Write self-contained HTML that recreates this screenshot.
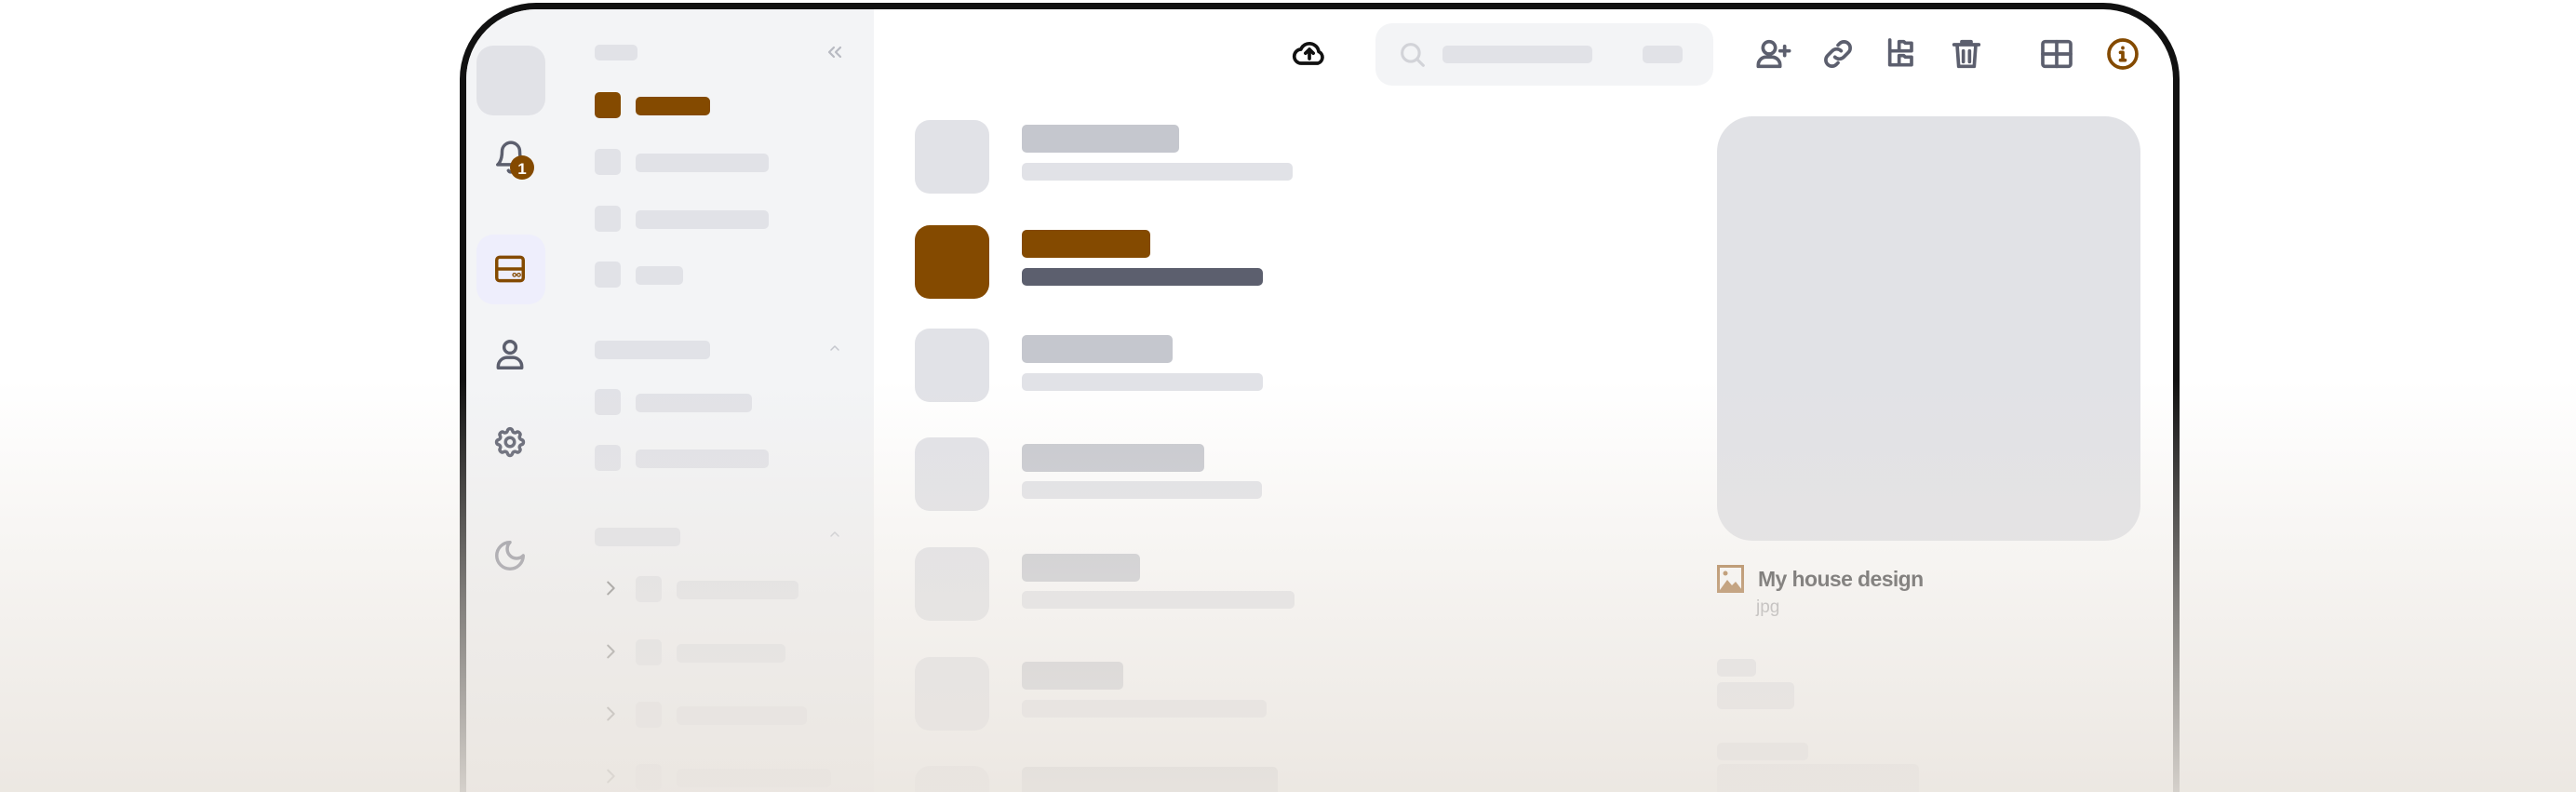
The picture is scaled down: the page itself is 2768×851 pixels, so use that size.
<!DOCTYPE html>
<html><head><meta charset="utf-8"><style>
*{margin:0;padding:0;box-sizing:border-box}
html,body{width:2768px;height:851px;overflow:hidden}
body{background:#fff;position:relative;font-family:"Liberation Sans",sans-serif}
#w{position:absolute;left:0;top:0;width:2768px;height:851px;overflow:hidden}
.a{position:absolute}
.frame{position:absolute;left:494px;top:3px;width:1848px;height:848px;border:7px solid #111;border-bottom:none;border-radius:82px 82px 0 0;background:#fff}
.sq{position:absolute;background:#e1e2e7;border-radius:5px}
.t{position:absolute;background:#c5c7ce;border-radius:5px}
.s{position:absolute;background:#e1e2e7;border-radius:5px}
.th{position:absolute;width:80px;height:79px;background:#e1e2e7;border-radius:16px;left:983px}
svg.i{position:absolute;fill:none;stroke:#5c5f6e;stroke-width:2.2;stroke-linecap:round;stroke-linejoin:round}
.fade{position:absolute;left:0;top:0;width:2768px;height:851px;background:linear-gradient(to bottom,rgba(234,229,223,0) 0%,rgba(234,229,223,0) 48%,rgba(234,229,223,.5) 75%,rgba(234,229,223,.9) 100%);pointer-events:none}
</style></head><body><div id="w">
<div class="frame"></div>
<div class="a" style="left:501px;top:10px;width:438px;height:841px;background:#f3f4f6;border-top-left-radius:75px"></div>
<div class="a" style="left:512px;top:49px;width:74px;height:75px;background:#e1e2e7;border-radius:18px"></div>
<svg class="i" style="left:530px;top:150px" width="38" height="38" viewBox="0 0 24 24"><path d="M6 8a6 6 0 0 1 12 0c0 7 3 9 3 9H3s3-2 3-9"/><path d="M10.3 21a1.9 1.9 0 0 0 3.4 0"/></svg>
<div class="a" style="left:548px;top:167px;width:26px;height:26px;border-radius:50%;background:#844a00;color:#fff;font:bold 17px 'Liberation Sans';text-align:center;line-height:30px">1</div>
<div class="a" style="left:512px;top:252px;width:74px;height:75px;background:#eeeefc;border-radius:18px"></div>
<svg class="i" style="left:529px;top:270px;stroke:#844a00" width="38" height="38" viewBox="0 0 24 24"><rect x="3" y="4" width="18" height="16" rx="2"/><path d="M3 12h18"/><circle cx="15" cy="16" r=".4"/><circle cx="18" cy="16" r=".4"/></svg>
<svg class="i" style="left:529px;top:362px" width="38" height="38" viewBox="0 0 24 24"><circle cx="12" cy="7" r="4"/><path d="M4 21v-1a6 6 0 0 1 6-6h4a6 6 0 0 1 6 6v1z"/></svg>
<svg class="i" style="left:529px;top:456px" width="38" height="38" viewBox="0 0 24 24"><path d="M10.3 4.3c.4-1.8 3-1.8 3.4 0a1.7 1.7 0 0 0 2.6 1.1c1.5-.9 3.3.8 2.4 2.4a1.7 1.7 0 0 0 1 2.5c1.9.5 1.9 3 0 3.5a1.7 1.7 0 0 0-1 2.5c.9 1.5-.9 3.3-2.4 2.4a1.7 1.7 0 0 0-2.6 1c-.4 1.9-3 1.9-3.4 0a1.7 1.7 0 0 0-2.6-1c-1.5.9-3.3-.9-2.4-2.4a1.7 1.7 0 0 0-1-2.5c-1.9-.5-1.9-3 0-3.5a1.7 1.7 0 0 0 1-2.5c-.9-1.6.9-3.3 2.4-2.4a1.7 1.7 0 0 0 2.6-1.1z"/><circle cx="12" cy="12" r="3"/></svg>
<svg class="i" style="left:529px;top:578px;stroke:#8a8b96" width="38" height="38" viewBox="0 0 24 24"><path d="M12 3a6 6 0 0 0 9 9 9 9 0 1 1-9-9z"/></svg>
<div class="sq" style="left:639px;top:48px;width:46px;height:17px"></div>
<svg class="i" style="left:885px;top:44px;stroke:#b8bac2" width="24" height="24" viewBox="0 0 24 24"><path d="M11 17l-5-5 5-5M18 17l-5-5 5-5"/></svg>
<div class="a" style="left:639px;top:99px;width:28px;height:28px;background:#844a00;border-radius:5px"></div>
<div class="a" style="left:683px;top:104px;width:80px;height:20px;background:#844a00;border-radius:5px"></div>
<div class="sq" style="left:639px;top:160px;width:28px;height:28px"></div><div class="sq" style="left:683px;top:165px;width:143px;height:20px"></div>
<div class="sq" style="left:639px;top:221px;width:28px;height:28px"></div><div class="sq" style="left:683px;top:226px;width:143px;height:20px"></div>
<div class="sq" style="left:639px;top:281px;width:28px;height:28px"></div><div class="sq" style="left:683px;top:286px;width:51px;height:20px"></div>
<div class="sq" style="left:639px;top:366px;width:124px;height:20px"></div>
<svg class="i" style="left:887px;top:366px;stroke:#c5c7ce" width="20" height="16" viewBox="0 0 24 24"><path d="M6 15l6-6 6 6"/></svg>
<div class="sq" style="left:639px;top:418px;width:28px;height:28px"></div><div class="sq" style="left:683px;top:423px;width:125px;height:20px"></div>
<div class="sq" style="left:639px;top:478px;width:28px;height:28px"></div><div class="sq" style="left:683px;top:483px;width:143px;height:20px"></div>
<div class="sq" style="left:639px;top:567px;width:92px;height:20px"></div>
<svg class="i" style="left:887px;top:566px;stroke:#c5c7ce" width="20" height="16" viewBox="0 0 24 24"><path d="M6 15l6-6 6 6"/></svg>
<svg class="i" style="left:645px;top:620px;stroke:#777" width="22" height="24" viewBox="0 0 24 24"><path d="M9 5l7 7-7 7"/></svg>
<div class="sq" style="left:683px;top:619px;width:28px;height:28px"></div><div class="sq" style="left:727px;top:624px;width:131px;height:20px"></div>
<svg class="i" style="left:645px;top:688px;stroke:#777" width="22" height="24" viewBox="0 0 24 24"><path d="M9 5l7 7-7 7"/></svg>
<div class="sq" style="left:683px;top:687px;width:28px;height:28px"></div><div class="sq" style="left:727px;top:692px;width:117px;height:20px"></div>
<svg class="i" style="left:645px;top:755px;stroke:#777" width="22" height="24" viewBox="0 0 24 24"><path d="M9 5l7 7-7 7"/></svg>
<div class="sq" style="left:683px;top:754px;width:28px;height:28px"></div><div class="sq" style="left:727px;top:759px;width:140px;height:20px"></div>
<svg class="i" style="left:645px;top:822px;stroke:#777" width="22" height="24" viewBox="0 0 24 24"><path d="M9 5l7 7-7 7"/></svg>
<div class="sq" style="left:683px;top:821px;width:28px;height:28px"></div><div class="sq" style="left:727px;top:826px;width:166px;height:20px"></div>
<svg class="i" style="left:1387px;top:38px;stroke:#111" width="40" height="40" viewBox="0 0 24 24"><path d="M7 18a4.5 4.5 0 0 1-.5-9 6 6 0 0 1 11.5 1.5A4 4 0 0 1 17.5 18z"/><path d="M12 15V9M9.5 11.5L12 9l2.5 2.5"/></svg>
<div class="a" style="left:1478px;top:25px;width:363px;height:67px;background:#f3f4f6;border-radius:18px"></div>
<svg class="i" style="left:1501px;top:42px;stroke:#d2d3d8" width="34" height="34" viewBox="0 0 24 24"><circle cx="10.5" cy="10.5" r="6.5"/><path d="M15.5 15.5L20 20"/></svg>
<div class="sq" style="left:1550px;top:49px;width:161px;height:19px"></div>
<div class="sq" style="left:1765px;top:49px;width:43px;height:19px"></div>
<svg class="i" style="left:1886px;top:38px" width="40" height="40" viewBox="0 0 24 24"><circle cx="9" cy="8" r="4"/><path d="M2 20v-1a5 5 0 0 1 5-5h4a5 5 0 0 1 5 5v1zM19 7v6M16 10h6"/></svg>
<svg class="i" style="left:1955px;top:38px" width="40" height="40" viewBox="0 0 24 24"><path d="M10 14a4 4 0 0 0 5.7 0l3-3a4 4 0 0 0-5.7-5.7l-1 1"/><path d="M14 10a4 4 0 0 0-5.7 0l-3 3a4 4 0 0 0 5.7 5.7l1-1"/></svg>
<svg class="i" style="left:2024px;top:38px" width="40" height="40" viewBox="0 0 24 24"><path d="M4 3v16h6M4 10h6"/><path d="M10 7V4h3l1 1h4v5h-8zM10 16v-3h3l1 1h4v5h-8z"/></svg>
<svg class="i" style="left:2093px;top:38px" width="40" height="40" viewBox="0 0 24 24"><path d="M4 6h16M9 6V4h6v2M6 6l1 14h10l1-14M10 10v7M14 10v7"/></svg>
<svg class="i" style="left:2190px;top:38px" width="40" height="40" viewBox="0 0 24 24"><rect x="3" y="4" width="18" height="16" rx="1.5"/><path d="M12 4v16M3 12h18"/></svg>
<svg class="i" style="left:2261px;top:38px;stroke:#844a00" width="40" height="40" viewBox="0 0 24 24"><circle cx="12" cy="12" r="9"/><path d="M12 8v.2M10.5 11h1.5v5M10.5 16h3"/></svg>
<div class="th" style="top:129px"></div><div class="t" style="left:1098px;top:134px;width:169px;height:30px"></div><div class="s" style="left:1098px;top:175px;width:291px;height:19px"></div>
<div class="th" style="top:242px;background:#844a00"></div><div class="t" style="left:1098px;top:247px;width:138px;height:30px;background:#844a00"></div><div class="s" style="left:1098px;top:288px;width:259px;height:19px;background:#5c5f6e"></div>
<div class="th" style="top:353px"></div><div class="t" style="left:1098px;top:360px;width:162px;height:30px"></div><div class="s" style="left:1098px;top:401px;width:259px;height:19px"></div>
<div class="th" style="top:470px"></div><div class="t" style="left:1098px;top:477px;width:196px;height:30px"></div><div class="s" style="left:1098px;top:517px;width:258px;height:19px"></div>
<div class="th" style="top:588px"></div><div class="t" style="left:1098px;top:595px;width:127px;height:30px"></div><div class="s" style="left:1098px;top:635px;width:293px;height:19px"></div>
<div class="th" style="top:706px"></div><div class="t" style="left:1098px;top:711px;width:109px;height:30px"></div><div class="s" style="left:1098px;top:752px;width:263px;height:19px"></div>
<div class="th" style="top:823px;height:28px;border-radius:16px 16px 0 0"></div><div class="t" style="left:1098px;top:824px;width:275px;height:27px;border-radius:5px 5px 0 0"></div>
<div class="a" style="left:1845px;top:125px;width:455px;height:456px;background:#e1e2e6;border-radius:38px"></div>
<svg class="a" style="left:1845px;top:607px" width="29" height="30" viewBox="0 0 29 30"><rect x="1.5" y="1.5" width="26" height="27" fill="none" stroke="#a0662a" stroke-width="3"/><path d="M3 27l8-11 5 6 4-4 7 9z" fill="#a0662a"/><circle cx="9" cy="9" r="2.5" fill="#a0662a"/></svg>
<div class="a" style="left:1889px;top:609px;font-size:23px;color:#2a2a2c;font-weight:bold;letter-spacing:-0.6px">My house design</div>
<div class="a" style="left:1887px;top:642px;font-size:19px;color:#a0a0a3">jpg</div>
<div class="sq" style="left:1845px;top:708px;width:42px;height:19px"></div>
<div class="sq" style="left:1845px;top:733px;width:83px;height:29px"></div>
<div class="sq" style="left:1845px;top:798px;width:98px;height:19px"></div>
<div class="sq" style="left:1845px;top:821px;width:217px;height:30px;border-radius:5px 5px 0 0"></div>
<div class="fade"></div>
</div></body></html>
